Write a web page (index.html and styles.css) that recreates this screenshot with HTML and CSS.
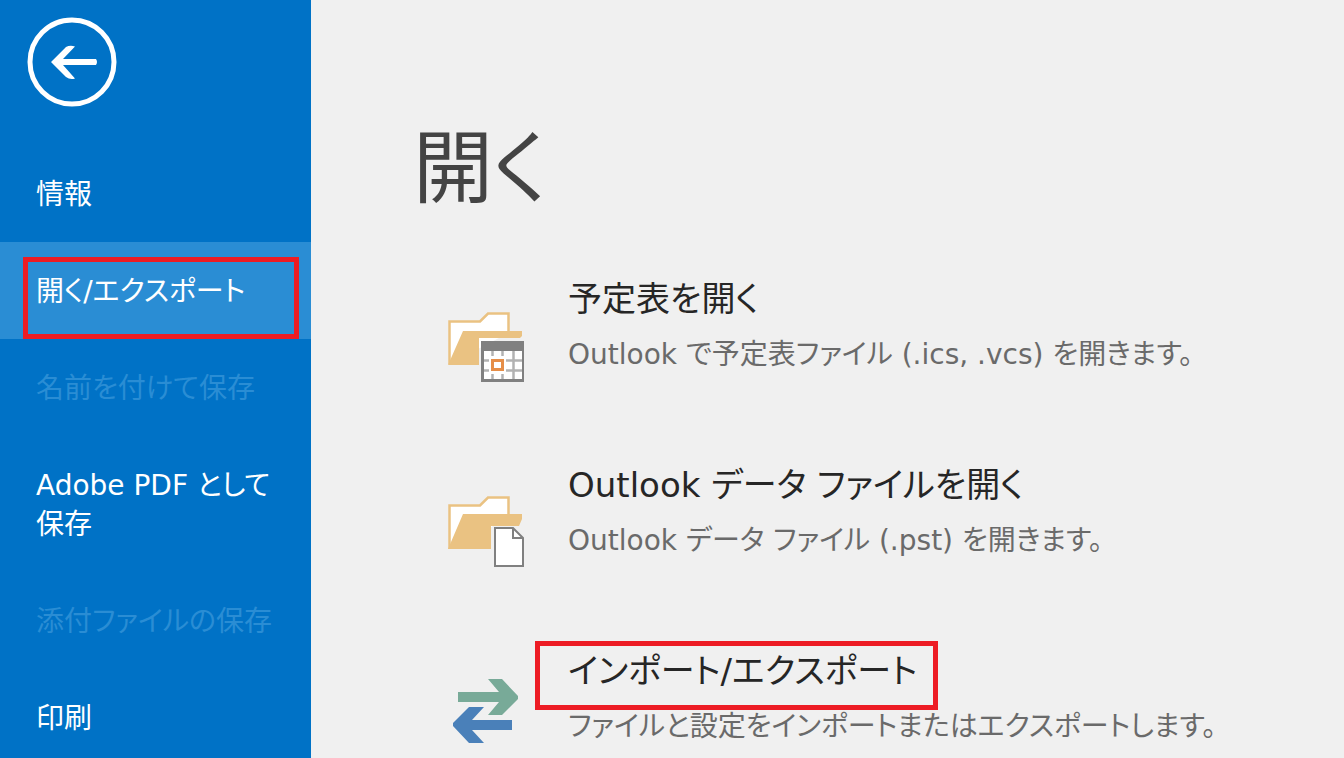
FILE: index.html
```html
<!DOCTYPE html>
<html lang="ja">
<head>
    <meta charset="UTF-8">
    <meta name="viewport" content="width=device-width, initial-scale=1.0">
    <title>開く</title>
    <link rel="stylesheet" href="styles.css">
</head>
<body>

    <!-- Sidebar -->
    <aside class="sidebar">
        <button type="button" class="back-btn" aria-label="戻る">
            <svg viewBox="0 0 90 90">
                <circle cx="45" cy="45" r="42" fill="none" stroke="#fff" stroke-width="5"/>
                <path d="M24 45L39 30Q43 28 48 29.500L36 42H69Q71 45 69 48H36L48 61.500Q43 63 39 60Z" fill="#fff"/>
            </svg>
        </button>
        <nav class="menu">
            <button type="button" class="menu-item">情報</button>
            <button type="button" class="menu-item active">開く/エクスポート</button>
            <button type="button" class="menu-item" disabled>名前を付けて保存</button>
            <button type="button" class="menu-item">Adobe PDF として<br>保存</button>
            <button type="button" class="menu-item" disabled>添付ファイルの保存</button>
            <button type="button" class="menu-item">印刷</button>
        </nav>
    </aside>

    <!-- Open page -->
    <main class="content">
        <h1>開く</h1>
        <div class="options">
            <button type="button" class="option">
                <svg class="option-icon" viewBox="0 -4 76 76">
                    <path d="M1.5 53V10.500H32L40 2.500H60.500V22" fill="#fff" stroke="#eac282" stroke-width="2.500"/>
                    <path d="M0 54L15 20H74V25L72 27H31V54Z" fill="#eac282"/>
                    <rect x="33" y="30" width="43" height="41" fill="#808080"/>
                    <rect x="36" y="40" width="38" height="28" fill="#fff"/>
                    <path d="M44.500 40V68M54.500 40V68M65.500 40V68M36 49.500H74M36 59.500H74" stroke="#b2b2b2" stroke-width="2.500"/>
                    <rect x="41" y="45" width="17" height="18" fill="#fff"/>
                    <rect x="44.500" y="49.500" width="10" height="9" fill="#fff" stroke="#e68e48" stroke-width="3"/>
                </svg>
                <span class="option-text">
                    <span class="option-title">予定表を開く</span>
                    <span class="option-desc">Outlook で予定表ファイル (.ics, .vcs) を開きます。</span>
                </span>
            </button>
            <button type="button" class="option">
                <svg class="option-icon" viewBox="0 -3 76 76">
                    <path d="M1.500 53V9.500H32L40 1.500H60.500V22" fill="#fff" stroke="#eac282" stroke-width="2.500"/>
                    <path d="M0 53L15 18H74V23L71 30H43V53Z" fill="#eac282"/>
                    <path d="M47 32H65L75 42V70H47Z" fill="#fff" stroke="#808080" stroke-width="2"/>
                    <path d="M65 32V42H75" fill="none" stroke="#808080" stroke-width="2"/>
                </svg>
                <span class="option-text">
                    <span class="option-title">Outlook データ ファイルを開く</span>
                    <span class="option-desc">Outlook データ ファイル (.pst) を開きます。</span>
                </span>
            </button>
            <button type="button" class="option">
                <svg class="option-icon" viewBox="0 0 76 76">
                    <path d="M10 13H51L40 0H54L70 17V20L54 36H40L51 23H10Z" fill="#78aa98"/>
                    <path d="M64 41H24L36 28H21L5 44V47L21 64H36L24 51H64Z" fill="#4a80b9"/>
                </svg>
                <span class="option-text">
                    <span class="option-title"><span class="marked">インポート/エクスポート</span></span>
                    <span class="option-desc">ファイルと設定をインポートまたはエクスポートします。</span>
                </span>
            </button>
        </div>
    </main>

</body>
</html>
```
FILE: styles.css
```css
/* Global Reset */
* { margin: 0; padding: 0; box-sizing: border-box; }

body {
    display: flex;
    height: 100vh;
    overflow: hidden;
    background-color: #f0f0f0;
    font-family: "DejaVu Sans", "Noto Sans CJK JP", sans-serif;
    font-feature-settings: "palt";
}

button {
    border: none;
    background: none;
    font: inherit;
    font-feature-settings: inherit;
    text-align: left;
    cursor: pointer;
}

/* Sidebar */
.sidebar {
    flex: none;
    width: 311px;
    padding-top: 17px;
    background-color: #0072c6;
}

.back-btn {
    display: block;
    width: 90px;
    height: 90px;
    margin: 0 0 38px 27px;
}

.back-btn svg { display: block; }

.menu {
    display: flex;
    flex-direction: column;
}

.menu-item {
    position: relative;
    padding: 30px 36px 28px;
    color: #fff;
    font-size: 28px;
    line-height: 39px;
    white-space: nowrap;
}

.menu-item.active { background-color: #2a8dd4; }

.menu-item:disabled {
    color: #2a8dd4;
    cursor: default;
}

/* Red frames */
.menu-item.active::after,
.marked::after {
    content: "";
    position: absolute;
    border: 5px solid #ed1c24;
}

.menu-item.active::after { inset: 15px 12px 0 23px; }

.marked {
    display: inline-block;
    position: relative;
}

.marked::after { inset: -2px -21px -11px -33px; }

/* Content */
.content {
    flex: 1;
    padding: 112px 40px 0 102px;
}

h1 {
    color: #444;
    font-size: 80px;
    font-weight: normal;
    line-height: 114px;
}

.options {
    display: flex;
    flex-direction: column;
    gap: 74px;
    padding: 45px 0 0 35px;
}

.option {
    display: flex;
    align-items: flex-end;
    gap: 44px;
    height: 112px;
}

.option-icon {
    flex: none;
    width: 76px;
    height: 76px;
}

.option-title,
.option-desc {
    display: block;
    line-height: 56px;
    white-space: nowrap;
}

.option-title {
    color: #262626;
    font-size: 34px;
}

.option-desc {
    color: #6a6a6a;
    font-size: 28px;
}
```
